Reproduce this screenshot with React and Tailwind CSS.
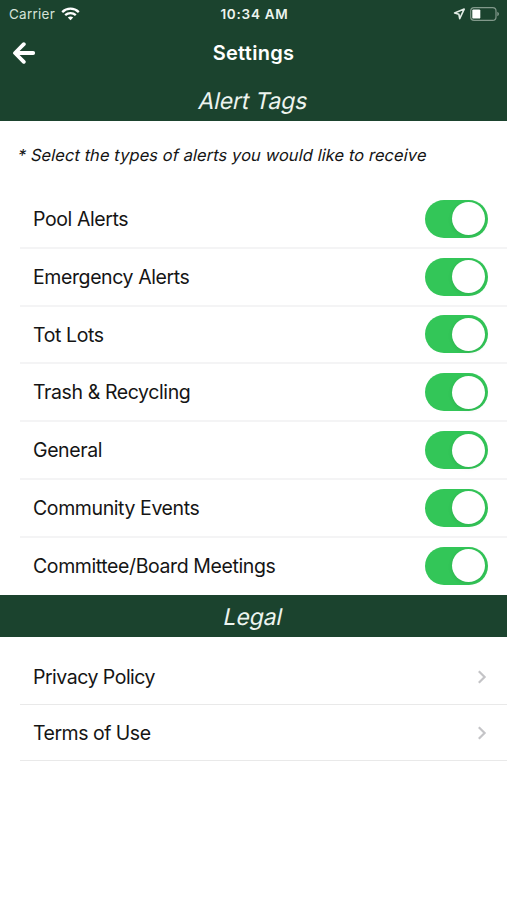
import { useState } from "react";

const alertTags = [
	"Pool Alerts",
	"Emergency Alerts",
	"Tot Lots",
	"Trash & Recycling",
	"General",
	"Community Events",
	"Committee/Board Meetings",
];

const legalLinks = ["Privacy Policy", "Terms of Use"];

const StatusBar = () => (
	<div className="grid h-7 grid-cols-3 items-center pl-[9px] pr-[7px] text-[13px]">
		<div className="flex items-center gap-1.5 text-[#d5e2d9]">
			<span className="text-[13.5px] tracking-[0.25px]">Carrier</span>
			<svg width="19" height="14" viewBox="0 0 19 14" fill="none" stroke="#fff" strokeWidth="2.3">
				<path d="M1.2 5.1C5.9.5 13.1.5 17.8 5.1" />
				<path d="M4.2 8.2c3-2.9 7.6-2.9 10.6 0" />
				<path d="M6.8 10.5c1.5-1.3 3.9-1.3 5.4 0L9.5 13.3z" fill="#fff" stroke="none" />
			</svg>
		</div>
		<span className="text-center text-[13.5px] font-semibold tracking-[0.75px] text-[#edf4ef]">10:34 AM</span>
		<div className="flex items-center justify-end gap-[5px]">
			<svg width="12" height="12" viewBox="0 0 12 12" fill="none" stroke="#e3ece6" strokeWidth="1.6" strokeLinejoin="round">
				<path d="M11.2 1.1 1.6 5l4.3 1.3.8 4.3z" />
			</svg>
			<svg width="30" height="14" viewBox="0 0 30 14">
				<rect x=".7" y=".7" width="25.3" height="12.6" rx="3.4" fill="none" stroke="#82998b" strokeWidth="1.2" />
				<rect x="2.3" y="2.4" width="8" height="9.2" rx="1.2" fill="#fff" />
				<path d="M27.3 4.8c2.2.8 2.2 3.6 0 4.4z" fill="#82998b" />
			</svg>
		</div>
	</div>
);

const NavBar = () => (
	<div className="grid h-[49px] grid-cols-3 items-center">
		<button aria-label="Back" className="pl-3">
			<svg width="24" height="22" viewBox="0 0 24 22" fill="none" stroke="#fff" strokeWidth="3.8" strokeLinecap="round" strokeLinejoin="round">
				<path d="M11.8 2.2 3 11l8.8 8.8M3.6 11h17.6" />
			</svg>
		</button>
		<h1 className="text-center text-[20px] font-semibold tracking-[0.3px]">Settings</h1>
	</div>
);

const SectionTitle = ({ children }) => (
	<h2 className="flex h-[42px] items-center justify-center bg-[#1b432e] pt-[2px] text-[23px] text-[#edf4ef]">
		<span className="-skew-x-12 tracking-[-0.15px]">{children}</span>
	</h2>
);

const Toggle = ({ label, checked, onChange }) => (
	<button
		role="switch"
		aria-label={label}
		aria-checked={checked}
		onClick={onChange}
		className={`flex h-[38px] w-[63px] items-center rounded-full px-[3px] ${
			checked ? "justify-end bg-[#33c658]" : "justify-start bg-gray-200"
		}`}
	>
		<span className="size-[33px] rounded-full bg-white shadow-[0_1px_4px_rgba(0,0,0,0.1)]" />
	</button>
);

export default function App() {
	const [enabled, setEnabled] = useState(alertTags);

	const toggleTag = (tag) => {
		setEnabled((prev) =>
			prev.includes(tag) ? prev.filter((t) => t !== tag) : [...prev, tag]
		);
	};

	return (
		<div className="h-[900px] w-[507px] overflow-hidden bg-white font-['Inter',sans-serif] text-[#151515]">
			<header className="h-[121px] bg-[#1b432e] text-white">
				<StatusBar />
				<NavBar />
				<div className="pt-[2px]">
					<SectionTitle>Alert Tags</SectionTitle>
				</div>
			</header>

			<p className="h-[70px] pl-[18px] text-[16.5px] leading-[69px]">
				<span className="inline-block -skew-x-12 tracking-[0.07px]">
					* Select the types of alerts you would like to receive
				</span>
			</p>

			<ul className="h-[404px]">
				{alertTags.map((tag) => (
					<li key={tag} className="ml-5 flex h-[57.8px] items-center justify-between border-b-2 border-[#f4f4f5] pr-[19px] pl-[13px] last:border-transparent">
						<span className="pt-[1.5px] text-[19.5px] tracking-[-0.4px]">{tag}</span>
						<Toggle label={tag} checked={enabled.includes(tag)} onChange={() => toggleTag(tag)} />
					</li>
				))}
			</ul>

			<SectionTitle>Legal</SectionTitle>

			<ul className="pt-3">
				{legalLinks.map((link) => (
					<li key={link} className="ml-5 flex h-14 items-center justify-between border-b border-[#e9e9e9] pr-5 pl-[13px]">
						<span className="pt-[2px] text-[19.5px] tracking-[-0.5px]">{link}</span>
						<svg width="10" height="14" viewBox="0 0 10 14" fill="none" stroke="#c4c4c7" strokeWidth="2.2">
							<path d="m1.8 1.3 5.8 5.7-5.8 5.7" />
						</svg>
					</li>
				))}
			</ul>
		</div>
	);
}
